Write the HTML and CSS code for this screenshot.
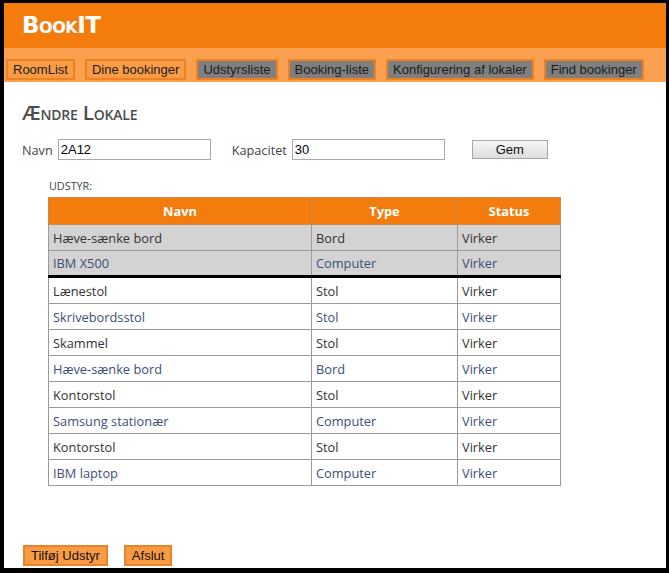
FILE: index.html
```html
<!DOCTYPE html>
<html lang="da">
<head>
<meta charset="utf-8">
<title>BookIT</title>
<link rel="stylesheet" href="styles.css">
</head>
<body>
<div class="frame">
  <header class="topbar"><h1 class="brand">BookIT</h1></header>
  <nav class="tabs">
    <a class="tab">RoomList</a>
    <a class="tab">Dine bookinger</a>
    <a class="tab tab-gray">Udstyrsliste</a>
    <a class="tab tab-gray">Booking-liste</a>
    <a class="tab tab-gray">Konfigurering af lokaler</a>
    <a class="tab tab-gray">Find bookinger</a>
  </nav>
  <main class="content">
    <h2 class="title">Ændre Lokale</h2>
    <div class="form-row">
      <label class="lbl">Navn</label>
      <input class="field" type="text" value="2A12">
      <label class="lbl lbl-cap">Kapacitet</label>
      <input class="field" type="text" value="30">
      <button class="btn-gem">Gem</button>
    </div>
    <div class="equip">
      <div class="equip-label">Udstyr:</div>
      <table class="grid">
        <colgroup><col class="c1"><col class="c2"><col class="c3"></colgroup>
        <thead><tr><th>Navn</th><th>Type</th><th>Status</th></tr></thead>
        <tbody>
          <tr class="sel"><td>Hæve-sænke bord</td><td>Bord</td><td>Virker</td></tr>
          <tr class="sel alt last-sel"><td>IBM X500</td><td>Computer</td><td>Virker</td></tr>
          <tr><td>Lænestol</td><td>Stol</td><td>Virker</td></tr>
          <tr class="alt"><td>Skrivebordsstol</td><td>Stol</td><td>Virker</td></tr>
          <tr><td>Skammel</td><td>Stol</td><td>Virker</td></tr>
          <tr class="alt"><td>Hæve-sænke bord</td><td>Bord</td><td>Virker</td></tr>
          <tr><td>Kontorstol</td><td>Stol</td><td>Virker</td></tr>
          <tr class="alt"><td>Samsung stationær</td><td>Computer</td><td>Virker</td></tr>
          <tr><td>Kontorstol</td><td>Stol</td><td>Virker</td></tr>
          <tr class="alt"><td>IBM laptop</td><td>Computer</td><td>Virker</td></tr>
        </tbody>
      </table>
    </div>
    <div class="actions">
      <button class="btn-orange">Tilføj Udstyr</button>
      <button class="btn-orange">Afslut</button>
    </div>
  </main>
</div>
</body>
</html>
```
FILE: styles.css
```css
html, body {
  margin: 0;
  padding: 0;
  background: #fff;
}
.frame {
  box-sizing: border-box;
  width: 669px;
  height: 573px;
  border-style: solid;
  border-color: #000;
  border-width: 3px 3px 5px 4px;
  display: flex;
  flex-direction: column;
}
.topbar {
  height: 45px;
  background: #f47c0c;
  padding-left: 18px;
  display: flex;
  align-items: center;
}
.brand {
  margin: 0;
  color: #fff;
  font-family: "DejaVu Sans", Verdana, sans-serif;
  font-weight: bold;
  font-variant: small-caps;
  font-size: 23px;
  letter-spacing: -0.5px;
  line-height: 1;
}
.tabs {
  height: 34px;
  box-sizing: border-box;
  background: #fba04f;
  padding: 11px 0 0 2px;
  display: flex;
  gap: 10px;
  align-items: flex-start;
}
.tab {
  box-sizing: border-box;
  height: 21px;
  line-height: 17px;
  padding: 0 5px;
  border: 2px solid #ee8122;
  background: #fa9b46;
  color: #1c1c1c;
  font-family: "Liberation Sans", Arial, sans-serif;
  font-size: 13px;
  white-space: nowrap;
}
.tab-gray {
  background: #7f7f7f;
}
.content {
  flex: 1;
  display: flex;
  flex-direction: column;
  padding: 18px 0 0 18px;
}
.title {
  margin: 0;
  font-family: "Open Sans", sans-serif;
  font-variant: small-caps;
  font-weight: 600;
  font-size: 20.5px;
  line-height: 24px;
  color: #4d4d4d;
  letter-spacing: -0.2px;
}
.form-row {
  margin-top: 15px;
  display: flex;
  align-items: center;
  height: 21px;
}
.lbl {
  font-family: "Open Sans", sans-serif;
  font-size: 12.7px;
  color: #444;
  margin-right: 5px;
}
.lbl-cap {
  margin-left: 21px;
}
.field {
  box-sizing: border-box;
  width: 153px;
  height: 21px;
  margin: 0;
  padding: 0 2px;
  border: 1px solid #aaa;
  font-family: "Liberation Sans", Arial, sans-serif;
  font-size: 13px;
  color: #000;
  background: #fff;
}
.btn-gem {
  box-sizing: border-box;
  margin-left: 27px;
  width: 76px;
  height: 19px;
  padding: 0;
  border: 1px solid #a8a8a8;
  border-radius: 0;
  background: linear-gradient(#f6f6f6, #dedede);
  font-family: "Liberation Sans", Arial, sans-serif;
  font-size: 13px;
  color: #111;
}
.equip {
  padding-left: 26px;
  margin-top: 19px;
}
.equip-label {
  font-family: "Open Sans", sans-serif;
  text-transform: uppercase;
  font-size: 10.8px;
  line-height: 14px;
  color: #444;
  margin-left: 1px;
  margin-bottom: 4px;
}
.grid {
  border-collapse: collapse;
  width: 512px;
  table-layout: fixed;
  font-family: "Open Sans", sans-serif;
  font-size: 12.8px;
}
.c1 { width: 263px; }
.c2 { width: 146px; }
.c3 { width: 103px; }
.grid th {
  background: #f47c0c;
  color: #fff;
  font-weight: bold;
  height: 26px;
  padding: 0;
  border: 1px solid #c98a56;
  text-align: center;
}
.grid td {
  height: 25px;
  padding: 0 4px;
  border: 1px solid #9a9a9a;
  color: #333;
  white-space: nowrap;
}
.grid tr.alt td {
  color: #3e4f78;
}
.grid tr.sel td {
  background: #d3d3d3;
}
.grid tr.last-sel td {
  border-bottom: 3px solid #000;
  height: 24px;
}
.actions {
  margin-top: auto;
  padding: 0 0 2px 1px;
  display: flex;
  gap: 16px;
}
.btn-orange {
  box-sizing: border-box;
  height: 21px;
  padding: 0 6px;
  border: 2px solid #e9832a;
  border-radius: 0;
  background: #f99b45;
  font-family: "Liberation Sans", Arial, sans-serif;
  font-size: 13px;
  color: #111;
}
```
